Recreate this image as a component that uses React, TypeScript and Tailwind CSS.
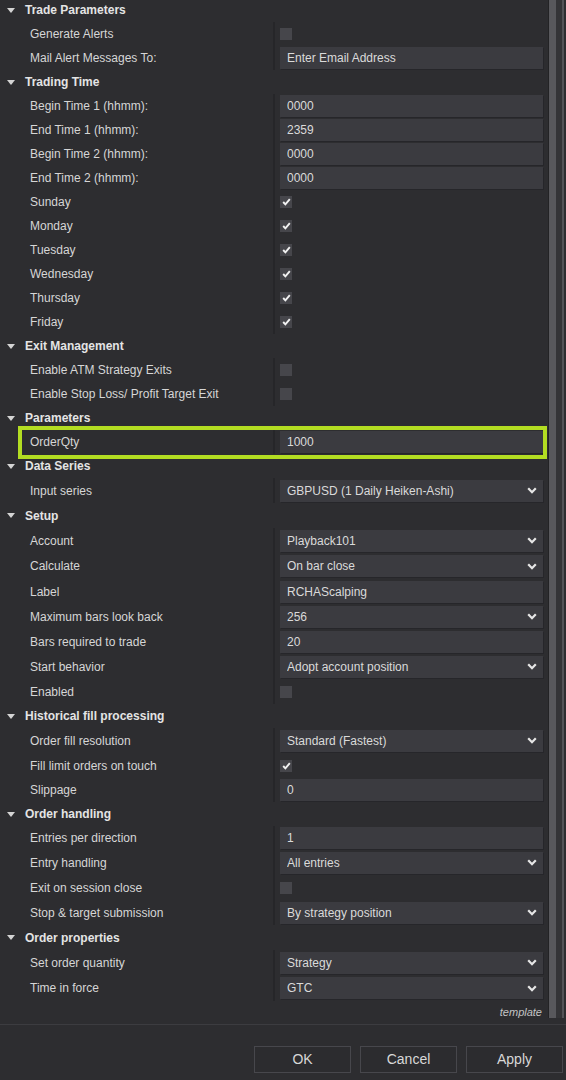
import React from "react";

type Row =
  | { kind: "header"; label: string; h?: number }
  | { kind: "text"; label: string; value: string; h?: number; highlight?: boolean }
  | { kind: "select"; label: string; value: string; h?: number }
  | { kind: "check"; label: string; checked: boolean; h?: number };

const heights: Record<number, string> = {
  24: "h-[24px]",
  25: "h-[25px]",
  26: "h-[26px]",
};

const rows: Row[] = [
  { kind: "header", label: "Trade Parameters" },
  { kind: "check", label: "Generate Alerts", checked: false },
  { kind: "text", label: "Mail Alert Messages To:", value: "Enter Email Address" },
  { kind: "header", label: "Trading Time" },
  { kind: "text", label: "Begin Time 1 (hhmm):", value: "0000" },
  { kind: "text", label: "End Time 1 (hhmm):", value: "2359" },
  { kind: "text", label: "Begin Time 2 (hhmm):", value: "0000" },
  { kind: "text", label: "End Time 2 (hhmm):", value: "0000" },
  { kind: "check", label: "Sunday", checked: true },
  { kind: "check", label: "Monday", checked: true },
  { kind: "check", label: "Tuesday", checked: true },
  { kind: "check", label: "Wednesday", checked: true },
  { kind: "check", label: "Thursday", checked: true },
  { kind: "check", label: "Friday", checked: true },
  { kind: "header", label: "Exit Management" },
  { kind: "check", label: "Enable ATM Strategy Exits", checked: false },
  { kind: "check", label: "Enable Stop Loss/ Profit Target Exit", checked: false },
  { kind: "header", label: "Parameters" },
  { kind: "text", label: "OrderQty", value: "1000", highlight: true },
  { kind: "header", label: "Data Series" },
  { kind: "select", label: "Input series", value: "GBPUSD (1 Daily Heiken-Ashi)", h: 25 },
  { kind: "header", label: "Setup", h: 25 },
  { kind: "select", label: "Account", value: "Playback101", h: 25 },
  { kind: "select", label: "Calculate", value: "On bar close", h: 26 },
  { kind: "text", label: "Label", value: "RCHAScalping", h: 25 },
  { kind: "select", label: "Maximum bars look back", value: "256", h: 25 },
  { kind: "text", label: "Bars required to trade", value: "20", h: 25 },
  { kind: "select", label: "Start behavior", value: "Adopt account position", h: 25 },
  { kind: "check", label: "Enabled", checked: false, h: 25 },
  { kind: "header", label: "Historical fill processing" },
  { kind: "select", label: "Order fill resolution", value: "Standard (Fastest)", h: 25 },
  { kind: "check", label: "Fill limit orders on touch", checked: true, h: 25 },
  { kind: "text", label: "Slippage", value: "0" },
  { kind: "header", label: "Order handling" },
  { kind: "text", label: "Entries per direction", value: "1" },
  { kind: "select", label: "Entry handling", value: "All entries", h: 25 },
  { kind: "check", label: "Exit on session close", checked: false, h: 25 },
  { kind: "select", label: "Stop & target submission", value: "By strategy position", h: 25 },
  { kind: "header", label: "Order properties", h: 25 },
  { kind: "select", label: "Set order quantity", value: "Strategy", h: 25 },
  { kind: "select", label: "Time in force", value: "GTC", h: 26 },
];

function Caret() {
  return (
    <svg width="8" height="5" viewBox="0 0 8 5" className="shrink-0">
      <polygon points="0,0 8,0 4,5" fill="#d4d4d4" />
    </svg>
  );
}

function Chevron() {
  return (
    <svg width="10" height="7" viewBox="0 0 10 7" className="shrink-0">
      <path d="M1.2 1.2 L5 5.2 L8.8 1.2" fill="none" stroke="#e6e6e6" strokeWidth="2.2" />
    </svg>
  );
}

function CheckBox({ checked }: { checked: boolean }) {
  return (
    <div className="w-[12px] h-[12px] bg-[#46464b] flex items-center justify-center">
      {checked && (
        <svg width="9" height="8" viewBox="0 0 9 8">
          <path d="M1.2 4 L3.4 6.4 L7.8 1.2" fill="none" stroke="#f2f2f2" strokeWidth="1.9" />
        </svg>
      )}
    </div>
  );
}

function GridRow({ row }: { row: Row }) {
  const h = heights[row.h ?? 24];

  if (row.kind === "header") {
    return (
      <div className={`${h} flex items-center pl-[7px] gap-[10px]`}>
        <Caret />
        <span className="font-bold text-[#e4e4e4]">{row.label}</span>
      </div>
    );
  }

  let value: React.ReactNode = null;
  if (row.kind === "check") {
    value = <CheckBox checked={row.checked} />;
  } else {
    value = (
      <div className="w-full h-[22px] bg-[#3b3b40] shadow-[1px_1px_0_#26262a] flex items-center pl-[7px] pr-[6px] text-[#dadada]">
        <span className="flex-1 truncate">{row.value}</span>
        {row.kind === "select" && <Chevron />}
      </div>
    );
  }

  return (
    <div className={`${h} flex relative`}>
      <div className="w-[273px] pl-[30px] flex items-center text-[#d6d6d6]">{row.label}</div>
      <div className="w-[2px] bg-[#262629]" />
      <div className="flex-1 flex items-center px-[5px]">{value}</div>
      {row.kind === "text" && row.highlight && (
        <div className="absolute left-[18px] right-[1px] top-[-4px] bottom-[-5px] border-[4px] border-[#b3dd22] pointer-events-none" />
      )}
    </div>
  );
}

export default function App() {
  return (
    <div
      className="w-[566px] h-[1080px] bg-[#2d2d30] flex flex-col text-[12px] overflow-hidden"
      style={{ fontFamily: '"Liberation Sans", Arial, sans-serif' }}
    >
      <div className="h-[1024px] flex">
        <div className="flex-1 overflow-hidden">
          <div className="-mt-[2px] flex flex-col">
            {rows.map((r, i) => (
              <GridRow key={i} row={r} />
            ))}
            <div className="h-[22px] flex items-center justify-end pr-[6px]">
              <span className="italic text-[11px] text-[#c4c4c4]">template</span>
            </div>
          </div>
        </div>
        <div className="w-[18px] flex pb-[6px]">
          <div className="w-[1px] bg-[#232325]" />
          <div className="w-[7px] bg-[#58585c]" />
          <div className="w-[6px] bg-[#343437]" />
          <div className="w-[2px] bg-[#535357]" />
          <div className="w-[2px]" />
        </div>
      </div>
      <div className="flex-1 border-t border-[#3c3c40] flex justify-end items-start pt-[21px] pr-[3px] gap-[9px]">
        {["OK", "Cancel", "Apply"].map((b) => (
          <button
            key={b}
            className="w-[97px] h-[27px] border border-[#47474c] bg-[#2c2c2f] text-[14px] text-[#d8d8d8]"
          >
            {b}
          </button>
        ))}
      </div>
    </div>
  );
}
